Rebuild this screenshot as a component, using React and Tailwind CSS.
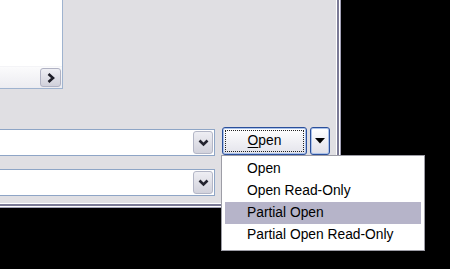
import React from "react";

// ── XP silver-theme open dialog, bottom-right corner with the Open split-button menu
const MENU = [
  { label: "Open" },
  { label: "Open Read-Only" },
  { label: "Partial Open", active: true },
  { label: "Partial Open Read-Only" },
];

function Chevron() {
  return (
    <svg width="11" height="8" viewBox="0 0 11 8">
      <polyline points="1.5,1.5 5.5,5.5 9.5,1.5" fill="none" stroke="#24242f" strokeWidth="2.6" />
    </svg>
  );
}

function Combo() {
  return (
    <div className="w-[215px] h-[27px] bg-white border-y border-r border-[#8ea5c6] flex items-center justify-end pr-px">
      <div className="w-[20px] h-[23px] rounded-[3px] border border-[#b3b6c6] bg-gradient-to-b from-[#eeeef3] to-[#d2d2dc] flex items-center justify-center">
        <Chevron />
      </div>
    </div>
  );
}

export default function App() {
  return (
    <div className="relative w-[450px] h-[269px] bg-black overflow-hidden" style={{ fontFamily: "'Liberation Sans', Arial, sans-serif" }}>

      {/* ── 창 프레임 */}
      <div className="w-fit border-r border-b border-[#a3a2b6]">
        <div className="border-r border-b border-white">
          <div className="border-r-2 border-b-2 border-[#7b7a96]">
            <div className="border-r border-b border-white">
              <div className="w-[336px] h-[203px] bg-[#e0dfe3] flex flex-col">

                {/* 목록 상자 + 가로 스크롤바 */}
                <div className="w-[63px] h-[89px] bg-white border-r border-b border-[#9fb3cf] flex flex-col justify-end">
                  <div className="h-[22px] bg-gradient-to-b from-[#fbfbfc] to-[#ececf1] flex items-center justify-end pr-px border-t border-[#f4f4f7]">
                    <div className="w-[21px] h-[19px] rounded-[3px] border border-[#b0b2c3] bg-gradient-to-b from-[#efeff4] to-[#d0d0da] flex items-center justify-center">
                      <svg width="8" height="10" viewBox="0 0 8 10">
                        <polyline points="1.5,1 6,5 1.5,9" fill="none" stroke="#1e1e28" strokeWidth="2.6" />
                      </svg>
                    </div>
                  </div>
                </div>

                {/* 콤보 + 버튼 영역 */}
                <div className="mt-[38px] flex">
                  <div className="flex flex-col gap-[13px] pt-[2px]">
                    <Combo />
                    <Combo />
                  </div>

                  <div className="ml-[7px] flex gap-[3px]">
                    <div className="w-[85px] h-[28px] rounded-[3px] border border-[#2b4f9a] bg-gradient-to-b from-white to-[#e3e3eb] p-[2px] shadow-[inset_0_0_0_1px_#a9c1ea]">
                      <div className="h-full border border-dotted border-[#222] flex items-center justify-center text-[13.8px] text-black">
                        <span><span className="underline underline-offset-2">O</span>pen</span>
                      </div>
                    </div>
                    <div className="w-[20px] h-[28px] rounded-[3px] border border-[#2b4f9a] bg-gradient-to-b from-white to-[#e0e0e9] shadow-[inset_0_0_0_1px_#a9c1ea] flex items-center justify-center">
                      <svg width="10" height="6" viewBox="0 0 10 6">
                        <polygon points="0,0 10,0 5,5.5" fill="#000" />
                      </svg>
                    </div>
                  </div>
                </div>

              </div>
            </div>
          </div>
        </div>
      </div>

      {/* ── 드롭다운 메뉴 */}
      <div className="absolute left-[221px] top-[155px] w-[204px] h-[96px] bg-white border border-[#9d9da6] pt-[2px] px-[3px] text-[13.8px] text-black">
        {MENU.map(m => (
          <div
            key={m.label}
            className={`h-[22px] flex items-center pl-[22px] ${m.active ? "bg-[#b6b4c9]" : ""}`}
          >
            {m.label}
          </div>
        ))}
      </div>
    </div>
  );
}
